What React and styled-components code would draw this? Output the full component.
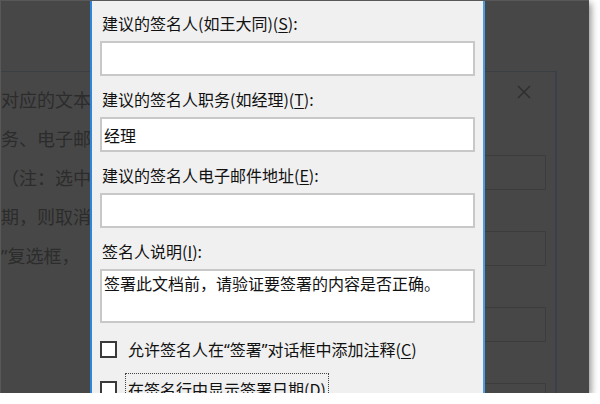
import React from "react";
import styled, { createGlobalStyle } from "styled-components";

const GlobalStyle = createGlobalStyle`
  body {
    margin: 0;
    background: #fff;
    font-family: "Noto Sans CJK SC", "Noto Sans", sans-serif;
  }
`;

const Screen = styled.div`
  position: relative;
  width: 589px;
  height: 393px;
  box-sizing: border-box;
  overflow: hidden;
  background: #474747;
  border-top: 1px solid #585858;
  border-left: 1px solid #585858;
  box-shadow: 2px 3px 7px rgba(0, 0, 0, 0.45);
`;

const BackDialog = styled.div`
  margin-top: 70px;
  width: 556px;
  height: 340px;
  box-sizing: border-box;
  border-top: 1px solid #3b3e42;
  border-right: 2px solid #3a4049;
  display: grid;
  grid-template-columns: 1fr 260px;
`;

const BackLabels = styled.div`
  padding-top: 8px;
  font-size: 18px;
  line-height: 39px;
  color: #2c2c2c;
  white-space: nowrap;
  overflow: hidden;
`;

const BackFields = styled.div`
  display: flex;
  flex-direction: column;
  align-items: flex-end;
  padding-right: 9px;
  gap: 41px;
`;

const CloseX = styled.svg`
  width: 14px;
  height: 14px;
  margin: 13px 15px 15px 0;
`;

const BackBox = styled.div`
  width: 240px;
  height: 35px;
  box-sizing: border-box;
  border: 1px solid #3c3c3c;
`;

const Dialog = styled.div`
  position: absolute;
  top: -1px;
  left: 89px;
  bottom: -1px;
  width: 395px;
  box-sizing: border-box;
  background: #f0f0f0;
  border-left: 2px solid #2f86d8;
  border-right: 2px solid #4f9be2;
  padding: 13px 8px 0 8px;
  color: #111;
  font-size: 16px;
`;

const Label = styled.div`
  height: 20px;
  line-height: 20px;
  padding-left: 2px;
  margin-bottom: 8px;
  white-space: nowrap;
`;

const U = styled.span`
  text-decoration: underline;
  text-underline-offset: 2px;
`;

const Quote = styled.span`
  font-family: "Noto Sans", sans-serif;
`;

const TextBox = styled.input`
  display: block;
  width: 100%;
  height: 35px;
  box-sizing: border-box;
  margin: 0 0 13px 0;
  padding: 0 2px;
  border: 2px solid #c8c8c8;
  background: #fff;
  font: inherit;
  color: inherit;
  outline: none;
`;

const TextArea = styled.textarea`
  display: block;
  width: 100%;
  height: 54px;
  box-sizing: border-box;
  margin: 0;
  padding: 1px 2px;
  border: 2px solid #c8c8c8;
  background: #fff;
  font: inherit;
  line-height: 22px;
  color: inherit;
  resize: none;
  overflow: hidden;
  outline: none;
`;

const CheckRow = styled.div`
  display: flex;
  align-items: center;
  height: 24px;
  margin-top: ${(p) => p.$top}px;
  white-space: nowrap;
`;

const Box = styled.span`
  flex: none;
  width: 17px;
  height: 17px;
  box-sizing: border-box;
  border: 2px solid #3a3a3a;
  background: #fff;
`;

const CheckText = styled.span`
  display: inline-block;
  margin-left: 8px;
  padding: 5px 2px;
  line-height: 20px;
  border: 1px dotted ${(p) => (p.$focus ? "#444" : "transparent")};
`;

export default function App() {
  return (
    <>
      <GlobalStyle />
      <Screen>
        <BackDialog>
          <BackLabels>
            <div>对应的文本框中键入</div>
            <div>务、电子邮件地址</div>
            <div>（注：选中</div>
            <div>期，则取消选中</div>
            <div>
              <Quote>”</Quote>复选框，
            </div>
          </BackLabels>
          <BackFields>
            <CloseX viewBox="0 0 14 14">
              <path d="M1 1L13 13M13 1L1 13" stroke="#2f2f2f" strokeWidth="1.5" fill="none" />
            </CloseX>
            <BackBox />
            <BackBox />
            <BackBox />
            <BackBox />
          </BackFields>
        </BackDialog>

        <Dialog>
          <Label>
            建议的签名人(如王大同)(<U>S</U>):
          </Label>
          <TextBox readOnly value="" />
          <Label>
            建议的签名人职务(如经理)(<U>T</U>):
          </Label>
          <TextBox readOnly value="经理" />
          <Label>
            建议的签名人电子邮件地址(<U>E</U>):
          </Label>
          <TextBox readOnly value="" />
          <Label>
            签名人说明(<U>I</U>):
          </Label>
          <TextArea readOnly value="签署此文档前，请验证要签署的内容是否正确。" />
          <CheckRow $top={14}>
            <Box />
            <CheckText>
              允许签名人在<Quote>“</Quote>签署<Quote>”</Quote>对话框中添加注释(<U>C</U>)
            </CheckText>
          </CheckRow>
          <CheckRow $top={16}>
            <Box />
            <CheckText $focus>
              在签名行中显示签署日期(<U>D</U>)
            </CheckText>
          </CheckRow>
        </Dialog>
      </Screen>
    </>
  );
}
